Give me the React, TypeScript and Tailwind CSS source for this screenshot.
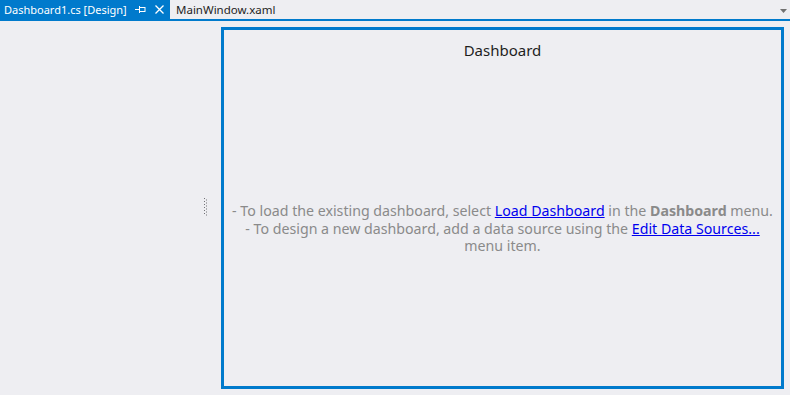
import React from 'react'

const font = { fontFamily: '"Segoe UI", "Noto Sans", "Liberation Sans", sans-serif' }

function PinIcon() {
  return (
    <svg width="11" height="9" viewBox="0 0 11 9" className="block">
      <path d="M0 4.5H4M4.5 1V8" stroke="white" strokeWidth="1" fill="none" />
      <rect x="4.5" y="2.5" width="5.5" height="4" stroke="white" strokeWidth="1" fill="none" />
    </svg>
  )
}

function CloseIcon() {
  return (
    <svg width="9" height="9" viewBox="0 0 9 9" className="block">
      <path d="M0.5 0.5L8.5 8.5M8.5 0.5L0.5 8.5" stroke="white" strokeWidth="1.3" />
    </svg>
  )
}

function Grip() {
  const dots = []
  for (let i = 0; i < 6; i++) {
    dots.push(<rect key={'a' + i} x={0} y={i * 3} width="1" height="1" fill="#707075" />)
    dots.push(<rect key={'b' + i} x={2} y={i * 3 + 1.5} width="1" height="1" fill="#707075" />)
  }
  return (
    <svg width="4" height="18" viewBox="0 0 4 18" className="block">
      {dots}
    </svg>
  )
}

export default function App() {
  return (
    <div className="w-[790px] h-[395px] bg-[#EEEEF2] flex flex-col overflow-hidden" style={font}>
      {/* tab strip */}
      <div className="h-[19px] flex items-stretch text-[11.5px] leading-[19px] whitespace-nowrap">
        <div className="bg-[#007ACC] text-white flex items-center pl-[4px] w-[170px]">
          <span className="text-[11px]">Dashboard1.cs [Design]</span>
          <span className="ml-auto flex items-center gap-[9px] pr-[6px]">
            <PinIcon />
            <CloseIcon />
          </span>
        </div>
        <div className="pl-[6px] text-[#1E1E1E]">MainWindow.xaml</div>
        <div className="ml-auto flex items-center pr-[3px]">
          <svg width="7" height="4" viewBox="0 0 7 4" className="block mt-[2px]">
            <path d="M0 0H7L3.5 4Z" fill="#717171" />
          </svg>
        </div>
      </div>
      <div className="h-[2px] bg-[#007ACC]" />

      {/* designer surface */}
      <div className="flex-1 flex">
        <div className="w-[221px] flex justify-end pr-[13px] pt-[177px]">
          <Grip />
        </div>
        <div className="mt-[6px] w-[563px] h-[362px] border-[3px] border-[#007ACC] flex flex-col items-center">
          <div className="mt-[9px] text-[15px] text-[#1E1E1E] leading-[22px]">Dashboard</div>
          <div className="mt-[141px] text-[14.2px] leading-[17.5px] text-[#8A8A8A] text-center whitespace-nowrap">
            <div>
              - To load the existing dashboard, select{' '}
              <span className="text-[#0000EE] underline">Load Dashboard</span> in the{' '}
              <span className="font-bold">Dashboard</span> menu.
            </div>
            <div>
              - To design a new dashboard, add a data source using the{' '}
              <span className="text-[#0000EE] underline">Edit Data Sources...</span>
            </div>
            <div>menu item.</div>
          </div>
        </div>
      </div>
    </div>
  )
}
